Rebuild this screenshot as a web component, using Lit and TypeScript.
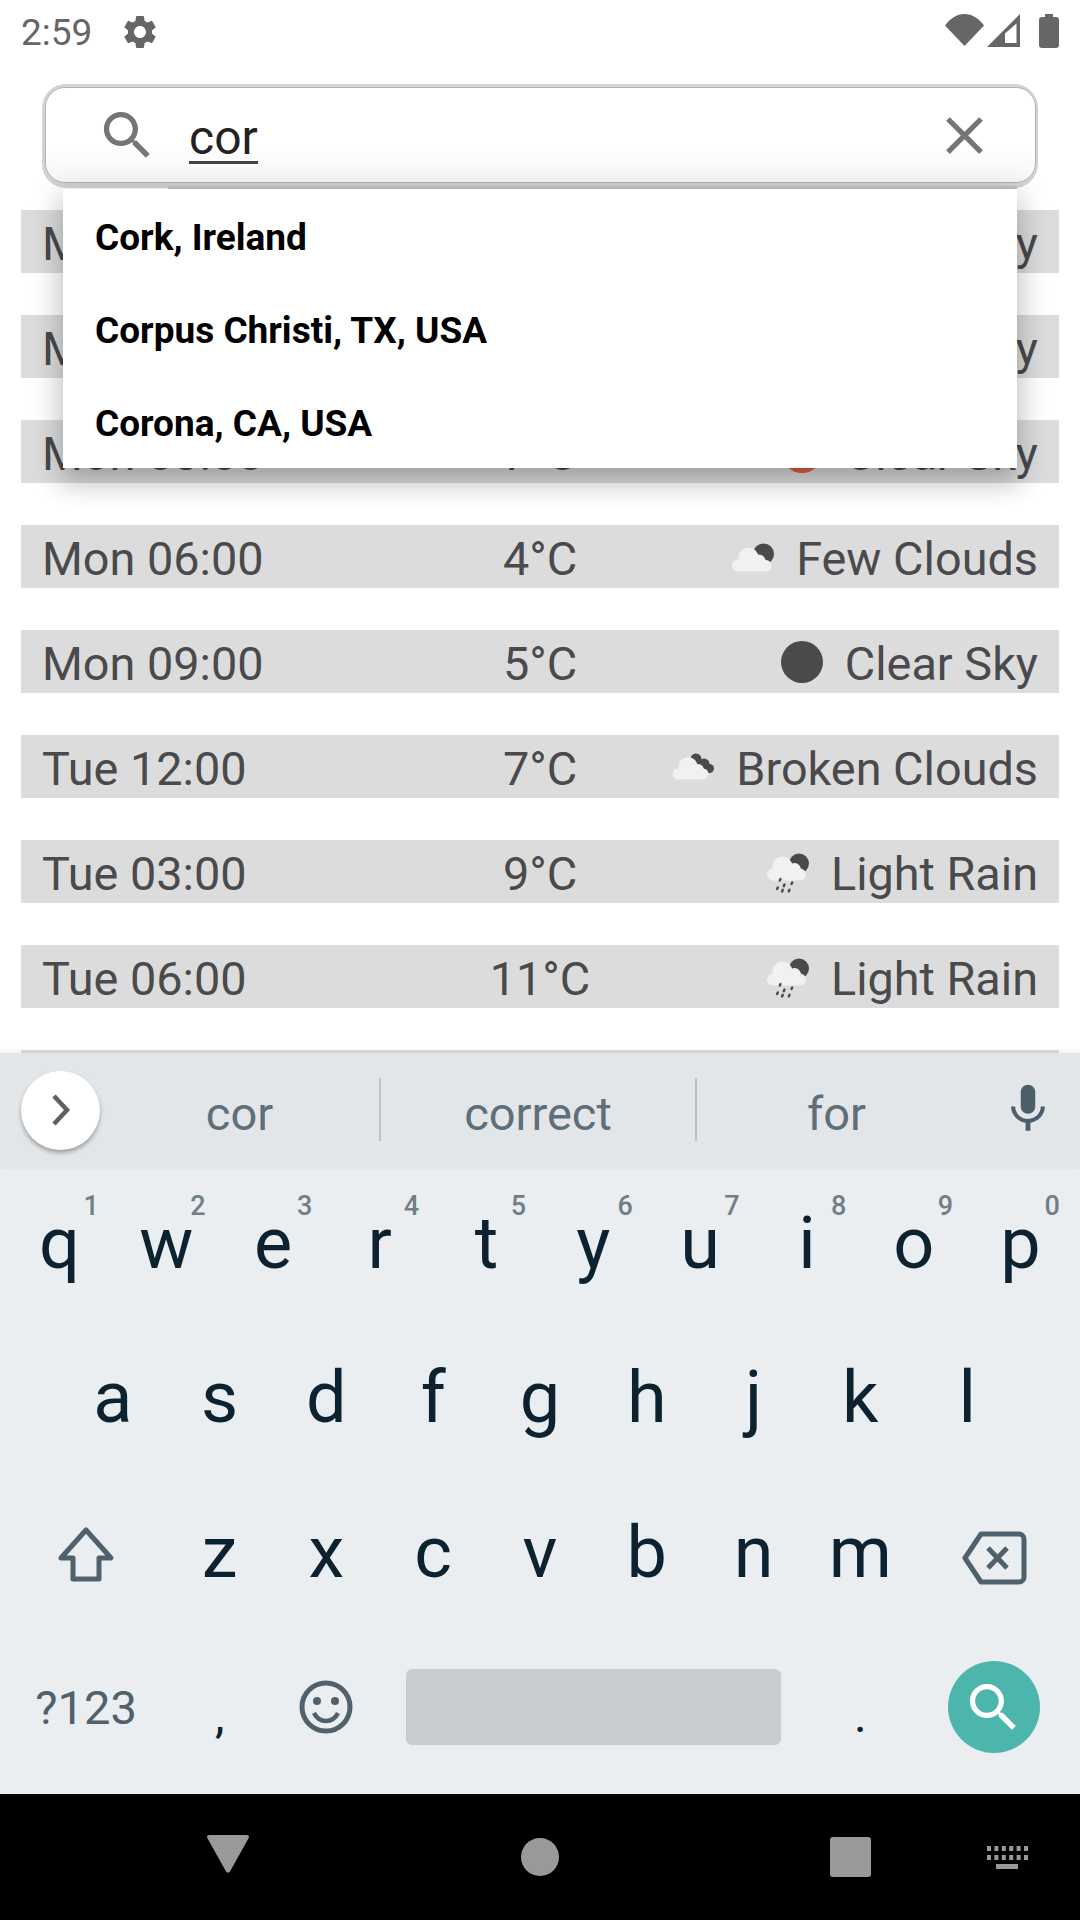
import { LitElement, css, html, svg } from "lit";
import { customElement } from "lit/decorators.js";

type Weather = "few" | "clear" | "sun" | "broken" | "rain";

const forecast: { time: string; temp: string; kind: Weather; label: string }[] = [
  { time: "Mon 09:00", temp: "6°C", kind: "sun", label: "Clear Sky" },
  { time: "Mon 12:00", temp: "6°C", kind: "sun", label: "Clear Sky" },
  { time: "Mon 03:00", temp: "7°C", kind: "sun", label: "Clear Sky" },
  { time: "Mon 06:00", temp: "4°C", kind: "few", label: "Few Clouds" },
  { time: "Mon 09:00", temp: "5°C", kind: "clear", label: "Clear Sky" },
  { time: "Tue 12:00", temp: "7°C", kind: "broken", label: "Broken Clouds" },
  { time: "Tue 03:00", temp: "9°C", kind: "rain", label: "Light Rain" },
  { time: "Tue 06:00", temp: "11°C", kind: "rain", label: "Light Rain" },
];

const cities = ["Cork, Ireland", "Corpus Christi, TX, USA", "Corona, CA, USA"];
const topRow = [..."qwertyuiop"];
const midRow = [..."asdfghjkl"];
const lowRow = [..."zxcvbnm"];

const SEARCH_PATH =
  "M15.5 14h-.79l-.28-.27C15.41 12.59 16 11.11 16 9.5 16 5.91 13.09 3 9.5 3S3 5.91 3 9.5 5.91 16 9.5 16c1.61 0 3.09-.59 4.23-1.57l.27.28v.79l5 4.99L20.49 19l-4.99-5zm-6 0C7.01 14 5 11.99 5 9.5S7.01 5 9.5 5 14 7.01 14 9.5 11.99 14 9.5 14z";

function weatherIcon(kind: Weather) {
  const dark = "#4a4a4c";
  const cloud = "#f1f1f1";
  if (kind === "clear" || kind === "sun") {
    return svg`<circle cx="21" cy="21" r="21" fill=${kind === "sun" ? "#e2603a" : dark} />`;
  }
  if (kind === "few") {
    return svg`
      <circle cx="31.5" cy="18" r="10.5" fill=${dark} />
      <g fill=${cloud}>
        <circle cx="6" cy="29.5" r="6" />
        <circle cx="16.5" cy="21.5" r="10" />
        <circle cx="27" cy="25" r="6.5" />
        <path d="M6 24h28a5.75 5.75 0 0 1 0 11.5H6z" />
      </g>`;
  }
  if (kind === "broken") {
    return svg`
      <g fill=${dark}>
        <circle cx="24" cy="13" r="5.5" />
        <circle cx="32" cy="18" r="5.5" />
        <circle cx="37.5" cy="22.5" r="4.5" />
        <path d="M20 10l16 9-8 10z" />
      </g>
      <g fill=${cloud}>
        <circle cx="6" cy="28" r="5.5" />
        <circle cx="16" cy="20.5" r="9.5" />
        <circle cx="26" cy="24" r="6" />
        <path d="M6 22.5h25a5.5 5.5 0 0 1 0 11H6z" />
      </g>`;
  }
  return svg`
    <circle cx="32" cy="12.5" r="10" fill=${dark} />
    <g fill=${cloud}>
      <circle cx="6" cy="23.5" r="6" />
      <circle cx="15.5" cy="15.5" r="10" />
      <circle cx="27.5" cy="18.5" r="6.5" />
      <path d="M6 17.5h27a6 6 0 0 1 0 12H6z" />
    </g>
    <g stroke=${dark} stroke-width="2.4" stroke-linecap="round">
      <path d="M13.5 28l-.7 1.6M10.8 36.4l-.7 1.6M17.5 33.6l-.7 1.6M15.8 38.8l-.7 1.6M25.2 31.4l-.7 1.6M22.5 38.8l-.7 1.6" />
    </g>`;
}

@customElement("app-root")
export class AppRoot extends LitElement {
  static styles = css`
    :host {
      display: flex;
      flex-direction: column;
      width: 1080px;
      height: 1920px;
      overflow: hidden;
      background: #fff;
      font-family: Roboto, sans-serif;
    }

    .status {
      flex: none;
      height: 84px;
      display: flex;
      align-items: flex-start;
      padding: 0 21px;
      box-sizing: border-box;
      color: #666;
    }
    .clock {
      font-size: 37px;
      line-height: 42px;
      margin-top: 12px;
      width: 99px;
    }
    .gear {
      width: 40px;
      height: 40px;
      margin-top: 12px;
      fill: #666;
    }
    .status-right {
      margin-left: auto;
      display: flex;
      align-items: flex-start;
      padding-top: 14px;
      fill: #666;
    }
    .cell {
      margin: 0 19px 0 3px;
    }

    .main {
      flex: none;
      height: 969px;
      position: relative;
      overflow: hidden;
    }
    .list {
      display: flex;
      flex-direction: column;
      gap: 42px;
      padding: 126px 21px 0;
    }
    .row {
      flex: none;
      height: 63px;
      box-sizing: border-box;
      background: #dcdcdc;
      padding: 5px 21px 0;
      display: grid;
      grid-template-columns: 1fr auto 1fr;
      align-items: center;
      font-size: 46.8px;
      line-height: 58px;
      color: #4a4a4c;
    }
    .row.end {
      height: 3px;
      padding: 0;
    }
    .desc {
      display: flex;
      justify-content: flex-end;
      align-items: center;
      gap: 22px;
    }
    .wx {
      width: 42px;
      height: 42px;
      display: block;
      margin-top: -5px;
    }

    .search-wrap {
      position: absolute;
      top: 0;
      left: 42px;
      right: 42px;
    }
    .search {
      height: 104px;
      box-sizing: border-box;
      padding: 3px 2px 5px 3px;
      background: #d3d3d3;
      border-radius: 24px;
    }
    .search-inner {
      height: 96px;
      box-sizing: border-box;
      display: flex;
      align-items: center;
      padding: 0 39px 0 50px;
      border: 1px solid #b4b4b4;
      border-radius: 20px;
      background: linear-gradient(#fff 60%, #f7f7f7);
    }
    .search-inner svg {
      width: 63px;
      height: 63px;
      fill: #757575;
      flex: none;
    }
    .query {
      margin-left: 30px;
      font-size: 48px;
      line-height: 47px;
      color: #222;
      border-bottom: 3px solid #444;
      margin-top: 8px;
    }
    .clear {
      margin-left: auto;
    }
    .dropdown {
      position: absolute;
      top: 105px;
      left: 21px;
      width: 954px;
      background: #fff;
      box-shadow: 0 8px 10px -5px rgba(0, 0, 0, 0.05),
        0 16px 24px 2px rgba(0, 0, 0, 0.14), 0 6px 30px 5px rgba(0, 0, 0, 0.12);
    }
    /* darker seam where the list meets the search box */
    .dropdown::before {
      content: "";
      position: absolute;
      top: -3px;
      left: 105px;
      right: 0;
      height: 3px;
      background: #b8b8b8;
    }
    .city {
      height: 91px;
      padding-top: 2px;
      line-height: 93px;
      padding-left: 32px;
      font-size: 37px;
      font-weight: 700;
      color: #000;
    }

    .strip {
      flex: none;
      position: relative;
      height: 116px;
      background: #e3e6e9;
      box-shadow: 0 -2px 6px rgba(0, 0, 0, 0.06);
      display: grid;
      grid-template-columns: 100px 279px 2px 314px 2px 279px 104px;
      align-items: center;
      font-size: 47px;
      color: #5f6f78;
      text-align: center;
    }
    .word {
      margin-top: 4px;
    }
    .more {
      width: 79px;
      height: 79px;
      margin-left: 21px;
      margin-top: -2px;
      border-radius: 50%;
      background: #fff;
      box-shadow: 0 3px 4px rgba(0, 0, 0, 0.3);
      display: grid;
      place-items: center;
    }
    .divider {
      height: 63px;
      margin-top: -4px;
      background: #bcc2c6;
    }
    .mic {
      width: 58px;
      height: 58px;
      fill: #4b5f6b;
      justify-self: center;
      margin-top: -4px;
    }

    .keyboard {
      flex: none;
      height: 625px;
      box-sizing: border-box;
      padding: 0 6px;
      background: #ebeef1;
      display: grid;
      grid-template-rows: 157px 150px 160px 158px;
      color: #0c2230;
      font-size: 72px;
    }
    .keys {
      display: flex;
    }
    .keys.mid {
      padding: 0 53.4px;
    }
    .key {
      flex: 1 1 0;
      position: relative;
      display: grid;
      place-items: center;
      padding-bottom: 8px;
      box-sizing: border-box;
    }
    .wide {
      flex: 1.5 1 0;
    }
    .hint {
      position: absolute;
      top: 20px;
      right: 14px;
      font-size: 27px;
      font-weight: 500;
      line-height: 34px;
      color: #707e86;
    }
    .icon-key {
      stroke: #4e616c;
      fill: none;
    }
    .shift {
      margin-top: 4px;
    }
    .backspace {
      margin-top: 12px;
    }
    .bottom .key {
      padding-bottom: 16px;
    }
    .bottom .punct {
      font-size: 48px;
      padding-bottom: 0;
    }
    .symbols {
      font-size: 47px;
      color: #4e616c;
    }
    .space-key {
      flex: 4 1 0;
    }
    .space {
      width: 375px;
      height: 76px;
      border-radius: 6px;
      background: #c8cdd0;
    }
    .go {
      width: 92px;
      height: 92px;
      border-radius: 50%;
      background: #4db6ac;
      display: grid;
      place-items: center;
    }
    .go svg {
      width: 63px;
      height: 63px;
      fill: #fff;
    }

    .nav {
      flex: none;
      height: 126px;
      background: #000;
      display: grid;
      grid-template-columns: 120px 216px 408px 212px 102px;
      align-items: center;
      justify-items: center;
      fill: #999;
    }
    .nav > :first-child {
      grid-column: 2;
      margin-top: -6px;
    }
  `;

  private row(item: (typeof forecast)[number]) {
    return html`
      <div class="row">
        <span>${item.time}</span>
        <span>${item.temp}</span>
        <span class="desc">
          <svg class="wx" viewBox="0 0 42 42">${weatherIcon(item.kind)}</svg>
          <span>${item.label}</span>
        </span>
      </div>
    `;
  }

  private statusBar() {
    return html`
      <div class="status">
        <span class="clock">2:59</span>
        <svg class="gear" viewBox="0 0 24 24">
          <path
            d="M19.14 12.94c.04-.3.06-.61.06-.94 0-.32-.02-.64-.07-.94l2.03-1.58a.49.49 0 0 0 .12-.61l-1.92-3.32a.488.488 0 0 0-.59-.22l-2.39.96c-.5-.38-1.03-.7-1.62-.94l-.36-2.54a.484.484 0 0 0-.48-.41h-3.84c-.24 0-.43.17-.47.41l-.36 2.54c-.59.24-1.13.57-1.62.94l-2.39-.96c-.22-.08-.47 0-.59.22L2.74 8.87c-.12.21-.08.47.12.61l2.03 1.58c-.05.3-.09.63-.09.94s.02.64.07.94l-2.03 1.58a.49.49 0 0 0-.12.61l1.92 3.32c.12.22.37.29.59.22l2.39-.96c.5.38 1.03.7 1.62.94l.36 2.54c.05.24.24.41.48.41h3.84c.24 0 .44-.17.47-.41l.36-2.54c.59-.24 1.13-.56 1.62-.94l2.39.96c.22.08.47 0 .59-.22l1.92-3.32c.12-.22.07-.47-.12-.61l-2.01-1.58zM12 15.6c-1.98 0-3.6-1.62-3.6-3.6s1.62-3.6 3.6-3.6 3.6 1.62 3.6 3.6-1.62 3.6-3.6 3.6z"
          />
        </svg>
        <div class="status-right">
          <svg width="39" height="32" viewBox="0 0 39 32">
            <path d="M19.5 32 0 11.5C5 4.5 12 0 19.5 0S34 4.500 39 11.500z" />
          </svg>
          <svg class="cell" width="33" height="33" viewBox="0 0 33 33">
            <path d="M33 0v33H0z" />
            <path d="M18 19.500 29.500 9.500V29H18z" fill="#fff" />
          </svg>
          <svg width="20" height="34" viewBox="0 0 20 34">
            <path
              d="M6 0h8v3h3a3 3 0 0 1 3 3v25a3 3 0 0 1-3 3H3a3 3 0 0 1-3-3V6a3 3 0 0 1 3-3h3z"
            />
          </svg>
        </div>
      </div>
    `;
  }

  private searchOverlay() {
    return html`
      <div class="search-wrap">
        <div class="search">
          <div class="search-inner">
            <svg viewBox="0 0 24 24"><path d=${SEARCH_PATH} /></svg>
            <span class="query">cor</span>
            <svg class="clear" viewBox="0 0 24 24">
              <path
                d="M19 6.410 17.590 5 12 10.590 6.410 5 5 6.410 10.590 12 5 17.590 6.410 19 12 13.410 17.590 19 19 17.590 13.410 12z"
              />
            </svg>
          </div>
        </div>
        <div class="dropdown">
          ${cities.map((c) => html`<div class="city">${c}</div>`)}
        </div>
      </div>
    `;
  }

  private strip() {
    return html`
      <div class="strip">
        <div class="more">
          <svg width="24" height="34" viewBox="0 0 24 34">
            <path d="M5 3l13 14L5 31" fill="none" stroke="#5f5f5f" stroke-width="4.500" />
          </svg>
        </div>
        <span class="word">cor</span>
        <span class="divider"></span>
        <span class="word">correct</span>
        <span class="divider"></span>
        <span class="word">for</span>
        <svg class="mic" viewBox="0 0 24 24">
          <path
            d="M12 14c1.660 0 3-1.340 3-3V5c0-1.660-1.340-3-3-3S9 3.340 9 5v6c0 1.660 1.340 3 3 3zm5.300-3c0 3-2.540 5.100-5.300 5.100S6.700 14 6.700 11H5c0 3.410 2.720 6.230 6 6.720V21h2v-3.280c3.280-.49 6-3.310 6-6.720h-1.700z"
          />
        </svg>
      </div>
    `;
  }

  private keyboard() {
    return html`
      <div class="keyboard">
        <div class="keys">
          ${topRow.map(
            (k, i) => html`<div class="key">
              <span>${k}</span><span class="hint">${(i + 1) % 10}</span>
            </div>`
          )}
        </div>
        <div class="keys mid">${midRow.map((k) => html`<div class="key">${k}</div>`)}</div>
        <div class="keys">
          <div class="key wide">
            <svg class="icon-key shift" width="58" height="56" viewBox="0 0 58 56">
              <path
                d="M29 4 54 32H42V53H16V32H4z"
                stroke-width="5"
                stroke-linejoin="round"
              />
            </svg>
          </div>
          ${lowRow.map((k) => html`<div class="key">${k}</div>`)}
          <div class="key wide">
            <svg class="icon-key backspace" width="66" height="54" viewBox="0 0 66 54">
              <path
                d="M20 3H58a5 5 0 0 1 5 5V46a5 5 0 0 1-5 5H20L4 27z"
                stroke-width="5"
                stroke-linejoin="round"
              />
              <path d="M27 17 46 37M46 17 27 37" stroke-width="5" />
            </svg>
          </div>
        </div>
        <div class="keys bottom">
          <div class="key wide symbols">?123</div>
          <div class="key punct">,</div>
          <div class="key">
            <svg class="icon-key" width="54" height="54" viewBox="0 0 54 54">
              <circle cx="27" cy="27" r="24" stroke-width="5" />
              <circle cx="18" cy="21" r="4" fill="#4e616c" stroke="none" />
              <circle cx="36" cy="21" r="4" fill="#4e616c" stroke="none" />
              <path d="M15 33c3 6 7.500 8 12 8s9-2 12-8" stroke-width="4.500" />
            </svg>
          </div>
          <div class="key space-key"><div class="space"></div></div>
          <div class="key punct">.</div>
          <div class="key wide">
            <div class="go">
              <svg viewBox="0 0 24 24"><path d=${SEARCH_PATH} /></svg>
            </div>
          </div>
        </div>
      </div>
    `;
  }

  private navBar() {
    return html`
      <div class="nav">
        <svg width="42" height="38" viewBox="0 0 42 38">
          <path d="M2 0h38a2 2 0 0 1 1.700 3L23 36.500a2.300 2.300 0 0 1-4 0L.3 3A2 2 0 0 1 2 0z" />
        </svg>
        <svg width="38" height="38" viewBox="0 0 38 38"><circle cx="19" cy="19" r="19" /></svg>
        <svg width="41" height="40" viewBox="0 0 41 40">
          <rect width="41" height="40" rx="3" />
        </svg>
        <svg width="41" height="23" viewBox="0 0 41 23">
          ${[0, 7.4, 14.8, 22.2, 29.6, 37].map(
            (x) => svg`<rect x=${x} y="0" width="4" height="5" /><rect x=${x} y="9" width="4" height="5" />`
          )}
          <rect x="9" y="18" width="22" height="5" />
        </svg>
      </div>
    `;
  }

  protected override render() {
    return html`
      ${this.statusBar()}
      <div class="main">
        <div class="list">
          ${forecast.map((f) => this.row(f))}
          <div class="row end"></div>
        </div>
        ${this.searchOverlay()}
      </div>
      ${this.strip()} ${this.keyboard()} ${this.navBar()}
    `;
  }
}
